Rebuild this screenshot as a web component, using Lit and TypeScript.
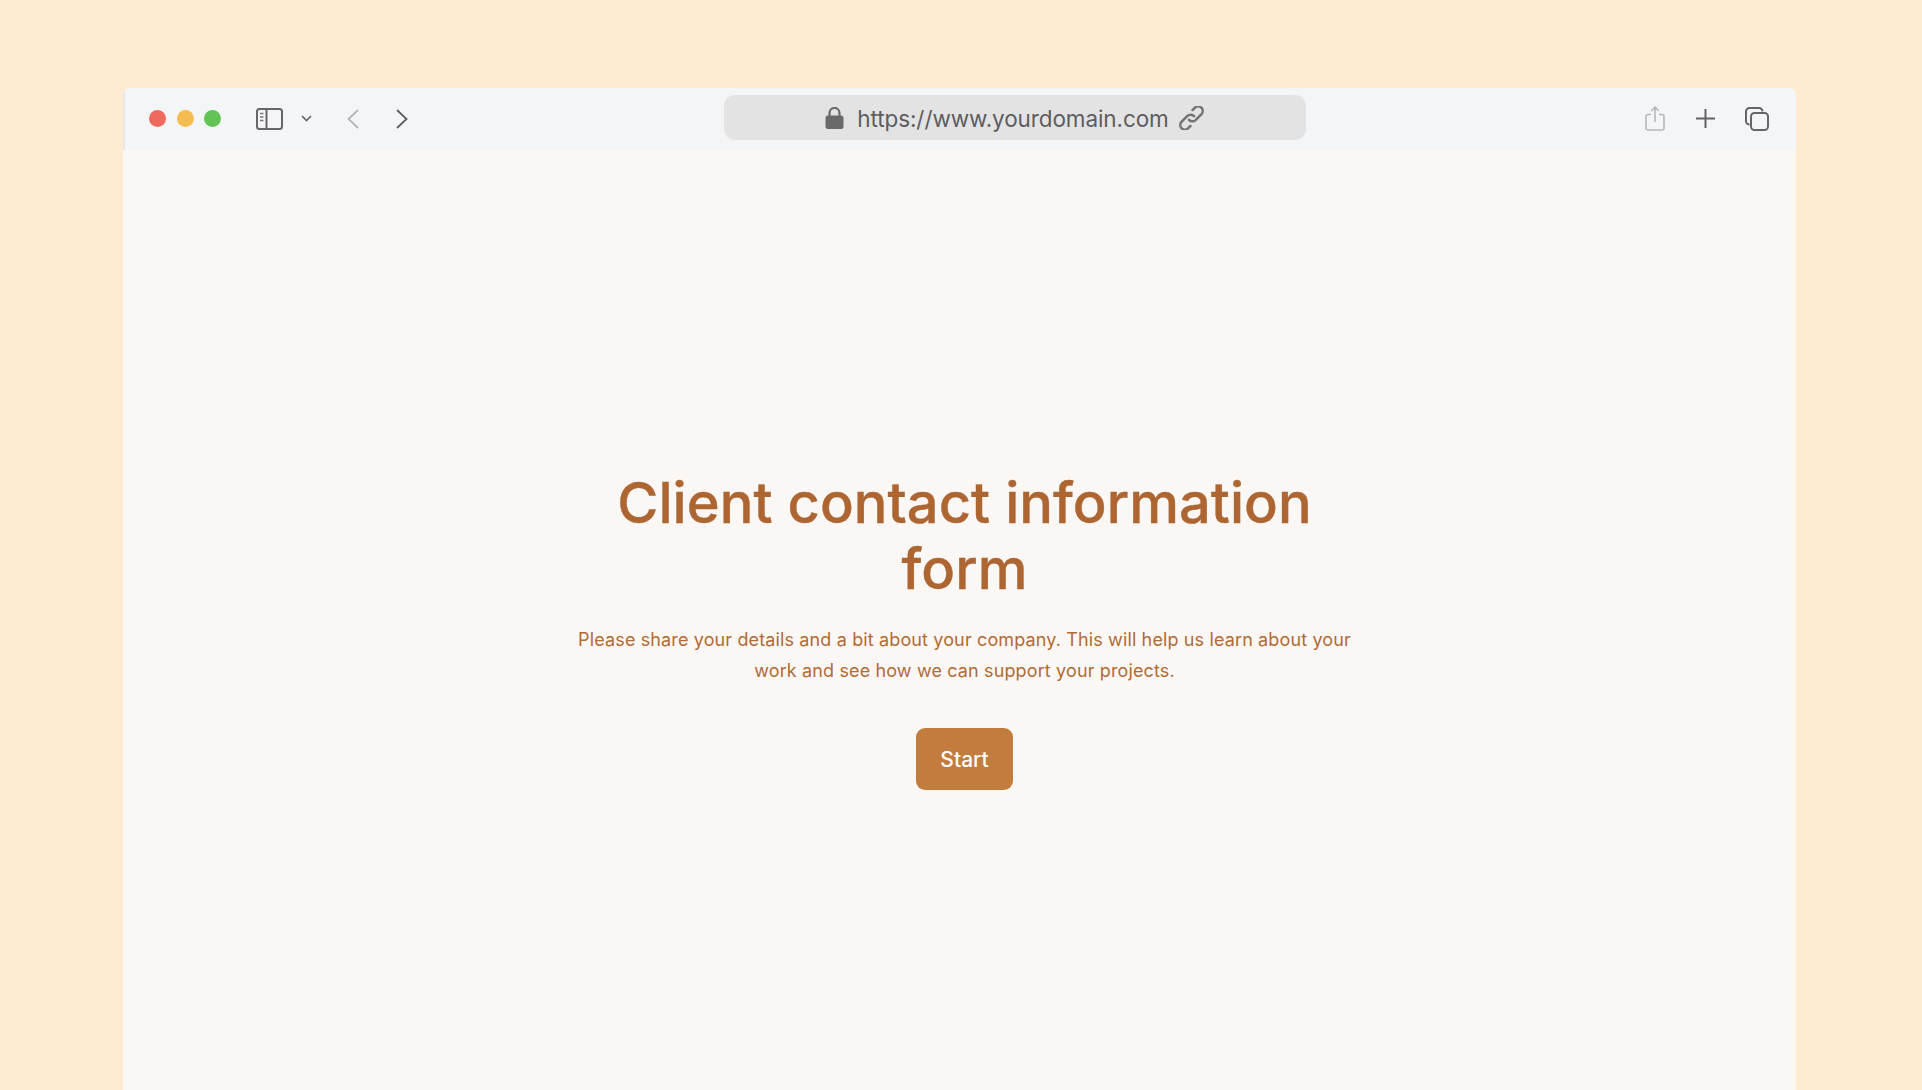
import { LitElement, html, css } from "lit";
import { customElement } from "lit/decorators.js";

@customElement("app-root")
export class AppRoot extends LitElement {
  static styles = css`
    :host { display: block; background: #fdecd2; padding: 87.5px 126px 0 123px; height: 1002.5px; font-family: Inter, "Noto Sans", sans-serif; }
    .window { height: 1002.5px; display: flex; flex-direction: column; background: #fbf7f4; border-radius: 8px 8px 0 0; overflow: hidden; }
    .toolbar { height: 62.5px; flex: none; background: #f4f5f7; display: flex; align-items: center; border-left: 2px solid #e6e7e9; box-sizing: border-box; position: relative; }
    .lights { display: flex; gap: 10.5px; margin-left: 24px; }
    .light { width: 17px; height: 17px; border-radius: 50%; }
    .red { background: #ee6a5f; }
    .yellow { background: #f5bd4f; }
    .green { background: #61c454; }
    svg { display: block; flex: none; fill: none; }
    .sidebar { margin-left: 35px; }
    .chev { margin-left: 17.5px; }
    .back { margin-left: 35px; }
    .fwd { margin-left: 37px; }
    .address { margin-left: 316px; width: 582px; height: 45px; margin-top: -2px; border-radius: 11px; background: #e3e3e4; display: flex; align-items: center; justify-content: center; gap: 13px; color: #5d5d5f; font-size: 22.5px; letter-spacing: -0.1px; }
    .address span { padding-top: 2px; }
    .address .link { margin-left: -3px; }
    .share { margin-left: 339.5px; }
    .plus { margin-left: 30.5px; }
    .tabs { margin-left: 30px; }
    .content { flex: 1; display: flex; flex-direction: column; align-items: center; padding: 320px 0 0 10px; }
    h1 { margin: 0; width: 780px; text-align: center; font-size: 56px; line-height: 66px; font-weight: 500; letter-spacing: 0.05px; -webkit-text-stroke: 0.4px #ad6532; color: #ad6532; }
    p { margin: 23px 0 0; width: 800px; text-align: center; font-size: 18px; line-height: 30.6px; letter-spacing: 0.13px; color: #b16b36; }
    button { margin-top: 42px; width: 97px; height: 62px; border: 0; border-radius: 9px; background: #c27c3d; color: #fff; font: 500 21px Inter, sans-serif; padding: 0; }
  `;

  render() {
    return html`
      <div class="window">
        <div class="toolbar">
          <div class="lights">
            <span class="light red"></span><span class="light yellow"></span><span class="light green"></span>
          </div>
          <svg class="sidebar" width="27" height="22" viewBox="0 0 27 22">
            <rect x="1" y="1" width="25" height="20" rx="2.5" stroke="#666668" stroke-width="2"/>
            <path d="M10.5 1v20" stroke="#666668" stroke-width="2"/>
            <path d="M4 5.5h3.5M4 9h3.5M4 12.5h3.5" stroke="#777" stroke-width="1.6"/>
          </svg>
          <svg class="chev" width="11" height="7" viewBox="0 0 11 7"><path d="M1 1l4.5 4.5L10 1" stroke="#666668" stroke-width="1.7"/></svg>
          <svg class="back" width="12" height="20" viewBox="0 0 12 20"><path d="M11 1L1.5 10 11 19" stroke="#b4b5b6" stroke-width="1.8"/></svg>
          <svg class="fwd" width="12" height="20" viewBox="0 0 12 20"><path d="M1 1l9.5 9L1 19" stroke="#5f5f61" stroke-width="1.8"/></svg>
          <div class="address">
            <svg width="19" height="22" viewBox="0 0 19 22">
              <path d="M4.5 9V6a5 5 0 0 1 10 0v3" stroke="#6a6a6c" stroke-width="2.2"/>
              <rect x="0.5" y="8.5" width="18" height="13.5" rx="2.5" fill="#6a6a6c"/>
            </svg>
            <span>https://www.yourdomain.com</span>
            <svg class="link" width="25" height="24" viewBox="0 0 25 24">
              <path d="M10 13.8a4.6 4.6 0 0 0 6.6.3l5.9-6a4.6 4.6 0 0 0-6.5-6.5L13.6 4" stroke="#747476" stroke-width="2.5" stroke-linecap="round"/>
              <path d="M15 10.2a4.6 4.6 0 0 0-6.6-.3l-5.9 6A4.6 4.6 0 0 0 9 22.4l2.4-2.4" stroke="#747476" stroke-width="2.5" stroke-linecap="round"/>
            </svg>
          </div>
          <svg class="share" width="20" height="25" viewBox="0 0 20 25">
            <path d="M6 8.5H3a2 2 0 0 0-2 2V22a2 2 0 0 0 2 2h14a2 2 0 0 0 2-2V10.5a2 2 0 0 0-2-2h-3" stroke="#b7b8b9" stroke-width="1.6"/>
            <path d="M10 16V1.5M6.2 5L10 1.2 13.8 5" stroke="#b7b8b9" stroke-width="1.6"/>
          </svg>
          <svg class="plus" width="19" height="19" viewBox="0 0 19 19"><path d="M9.5 0v19M0 9.5h19" stroke="#636365" stroke-width="2"/></svg>
          <svg class="tabs" width="24" height="24" viewBox="0 0 24 24">
            <path d="M4.5 17.5A3.5 3.5 0 0 1 1 14V4.5A3.5 3.5 0 0 1 4.5 1H14a3.5 3.5 0 0 1 3.5 3.5" stroke="#666668" stroke-width="2"/>
            <rect x="6" y="6" width="17" height="17" rx="3.5" stroke="#666668" stroke-width="2"/>
          </svg>
        </div>
        <div class="content">
          <h1>Client contact information form</h1>
          <p>Please share your details and a bit about your company. This will help us learn about your work and see how we can support your projects.</p>
          <button>Start</button>
        </div>
      </div>
    `;
  }
}
